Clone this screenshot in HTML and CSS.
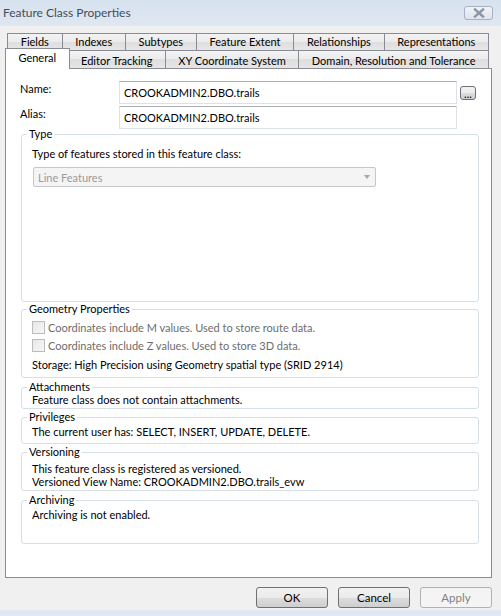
FILE: index.html
```html
<!DOCTYPE html>
<html lang="en">
<head>
  <meta charset="UTF-8">
  <title>Feature Class Properties</title>
  <link rel="stylesheet" href="styles.css">
</head>
<body>
  <div class="window">
    <!-- Caption -->
    <div class="titlebar">
      <span class="title">Feature Class Properties</span>
      <button class="close-btn" aria-label="Close">
        <svg width="14" height="10" viewBox="0 0 14 10">
          <path d="M3 1.5 L11 8.5 M11 1.5 L3 8.5" stroke="#8a96a6" stroke-width="2.4" stroke-linecap="square" fill="none"/>
        </svg>
      </button>
    </div>

    <!-- Tab strip, two rows -->
    <div class="tabs">
      <div class="tab-row">
        <div class="tab">Fields</div>
        <div class="tab">Indexes</div>
        <div class="tab">Subtypes</div>
        <div class="tab">Feature Extent</div>
        <div class="tab">Relationships</div>
        <div class="tab">Representations</div>
      </div>
      <div class="tab-row front">
        <div class="tab selected">General</div>
        <div class="tab">Editor Tracking</div>
        <div class="tab">XY Coordinate System</div>
        <div class="tab">Domain, Resolution and Tolerance</div>
      </div>
    </div>

    <div class="panel">
      <div class="field-row">
        <label class="field-label">Name:</label>
        <div class="textbox">CROOKADMIN2.DBO.trails</div>
        <button class="browse-btn">...</button>
      </div>
      <div class="field-row">
        <label class="field-label">Alias:</label>
        <div class="textbox">CROOKADMIN2.DBO.trails</div>
      </div>

      <fieldset class="group group-type">
        <legend>Type</legend>
        <div class="line">Type of features stored in this feature class:</div>
        <div class="combo">
          <span>Line Features</span>
          <span class="combo-arrow"></span>
        </div>
      </fieldset>

      <fieldset class="group group-geometry">
        <legend>Geometry Properties</legend>
        <div class="check-row"><span class="checkbox"></span>Coordinates include M values. Used to store route data.</div>
        <div class="check-row"><span class="checkbox"></span>Coordinates include Z values. Used to store 3D data.</div>
        <div class="line storage">Storage: High Precision using Geometry spatial type (SRID 2914)</div>
      </fieldset>

      <fieldset class="group group-attachments">
        <legend>Attachments</legend>
        <div class="line">Feature class does not contain attachments.</div>
      </fieldset>

      <fieldset class="group group-privileges">
        <legend>Privileges</legend>
        <div class="line">The current user has: SELECT, INSERT, UPDATE, DELETE.</div>
      </fieldset>

      <fieldset class="group group-versioning">
        <legend>Versioning</legend>
        <div class="line tight">This feature class is registered as versioned.</div>
        <div class="line tight">Versioned View Name: CROOKADMIN2.DBO.trails_evw</div>
      </fieldset>

      <fieldset class="group group-archiving">
        <legend>Archiving</legend>
        <div class="line">Archiving is not enabled.</div>
      </fieldset>
    </div>

    <div class="button-bar">
      <button class="btn">OK</button>
      <button class="btn">Cancel</button>
      <button class="btn" disabled>Apply</button>
    </div>
    <div class="frame-bottom"></div>
  </div>
</body>
</html>
```

FILE: styles.css
```css
/* Dialog shell */
* {
  box-sizing: border-box;
}

body {
  margin: 0;
  background-color: #f0f0f0;
  font-family: "Lato", "Liberation Sans", sans-serif;
  font-size: 11px;
  color: #000;
}

.window {
  width: 501px;
  height: 616px;
  display: flex;
  flex-direction: column;
  overflow: hidden;
}

/* Caption bar */
.titlebar {
  height: 26px;
  flex: none;
  display: flex;
  align-items: flex-start;
  justify-content: space-between;
  padding: 0 8px 0 3px;
  background: linear-gradient(#d7e2ef, #dfe7f1);
}

.title {
  margin-top: 5px;
  font-size: 12px;
  color: #444d58;
}

.close-btn {
  margin-top: 6px;
  width: 29px;
  height: 14px;
  padding: 0;
  display: flex;
  align-items: center;
  justify-content: center;
  border: 1px solid #a7b3c2;
  border-radius: 3px;
  background: linear-gradient(#f1f4f8, #dde4ec);
}

/* Tabs */
.tabs {
  flex: none;
  padding: 7px 0 0 7px;
  width: 489px;
}

.tab-row {
  display: flex;
  height: 17px;
}

.tab-row.front {
  height: 18px;
}

.tab {
  flex: 1 1 auto;
  margin-left: -1px;
  text-align: center;
  white-space: nowrap;
  line-height: 16px;
  border: 1px solid #898c95;
  border-bottom: none;
  background: linear-gradient(#f3f3f3, #ebebeb 50%, #dedede 50%, #e6e6e6);
}

.tab:first-child {
  margin-left: 0;
}

.tab-row.front .tab {
  line-height: 18px;
  padding-top: 1px;
}

.tab-row.front .tab.selected {
  position: relative;
  z-index: 1;
  margin: -2px -2px -1px -2px;
  padding-top: 0;
  line-height: 17px;
  background: #fff;
}

.tab-row.front .tab.selected + .tab {
  margin-left: 0;
}

/* Page body */
.panel {
  flex: none;
  width: 487px;
  height: 510px;
  margin-left: 5px;
  padding: 12px 13px 0 14px;
  border: 1px solid #898c95;
  background-color: #fff;
}

.field-row {
  display: flex;
  align-items: flex-start;
  height: 23px;
  margin-bottom: 2px;
}

.field-label {
  width: 99px;
  flex: none;
  line-height: 15px;
}

.textbox {
  width: 338px;
  height: 23px;
  padding: 0 4px;
  line-height: 21px;
  border: 1px solid #dde1e8;
  border-top-color: #abadb3;
  background: #fff;
}

.browse-btn {
  margin: 5px 0 0 3px;
  width: 16px;
  height: 14px;
  padding: 0;
  font-family: inherit;
  font-size: 11px;
  line-height: 14px;
  border: 1px solid #707070;
  border-radius: 3px;
  background: linear-gradient(#f2f2f2, #ebebeb 50%, #dddddd 50%, #cfcfcf);
}

/* Group boxes */
.group {
  margin: 0 0 0 1px;
  width: 458px;
  padding: 0 10px;
  border: 1px solid #d5dfe5;
  border-radius: 3px;
  min-inline-size: 0;
}

.group legend {
  margin-left: -5px;
  padding: 0 2px;
  line-height: 14px;
}

.line {
  line-height: 14px;
  white-space: nowrap;
}

.line.tight {
  line-height: 13px;
}

.group-type {
  margin-top: -4px;
  padding-bottom: 114px;
}

.group-type .line {
  margin-top: 6px;
}

.combo {
  margin: 6px 0 0 1px;
  width: 343px;
  height: 20px;
  padding: 0 4px;
  display: flex;
  align-items: center;
  justify-content: space-between;
  color: #9a9a9a;
  border: 1px solid #c4c7cb;
  border-radius: 2px;
  background: #f4f4f4;
}

.combo-arrow {
  width: 0;
  height: 0;
  margin-right: 1px;
  border-left: 3.5px solid transparent;
  border-right: 3.5px solid transparent;
  border-top: 4px solid #a6a6a6;
}

.group-geometry {
  padding-bottom: 5px;
}

.check-row {
  display: flex;
  align-items: center;
  height: 18px;
  color: #6d6d6d;
  white-space: nowrap;
}

.check-row:first-of-type {
  margin-top: 2px;
}

.checkbox {
  width: 13px;
  height: 13px;
  margin-right: 3px;
  border: 1px solid #bcbcbc;
  background: linear-gradient(135deg, #e6e6e6, #f8f8f8);
}

.storage {
  margin-top: 4px;
}

.group-attachments {
  margin-top: 2px;
  padding-bottom: 1px;
}

.group-attachments .line {
  margin-top: -1px;
}

.group-privileges {
  margin-top: 1px;
  padding-bottom: 4px;
}

.group-privileges .line {
  margin-top: 1px;
}

.group-versioning {
  margin-top: 1px;
  padding-bottom: 2px;
}

.group-versioning .line:first-of-type {
  margin-top: 3px;
}

.group-archiving {
  margin-top: 2px;
  padding-bottom: 21px;
}

.group-archiving .line {
  margin-top: 1px;
}

/* OK / Cancel / Apply */
.button-bar {
  flex: none;
  height: 32px;
  display: flex;
  justify-content: flex-end;
  gap: 10px;
  padding: 9px 9px 0 0;
}

.btn {
  width: 72px;
  height: 21px;
  padding: 0;
  font-family: inherit;
  font-size: 11.5px;
  color: #000;
  border: 1px solid #707070;
  border-radius: 3px;
  background: linear-gradient(#f2f2f2, #ebebeb 50%, #dddddd 50%, #cfcfcf);
}

.btn:disabled {
  color: #838383;
  border-color: #adb2b5;
  background: #f4f4f4;
}

.frame-bottom {
  flex: none;
  height: 6px;
  background: #dfe8f3;
}
```
